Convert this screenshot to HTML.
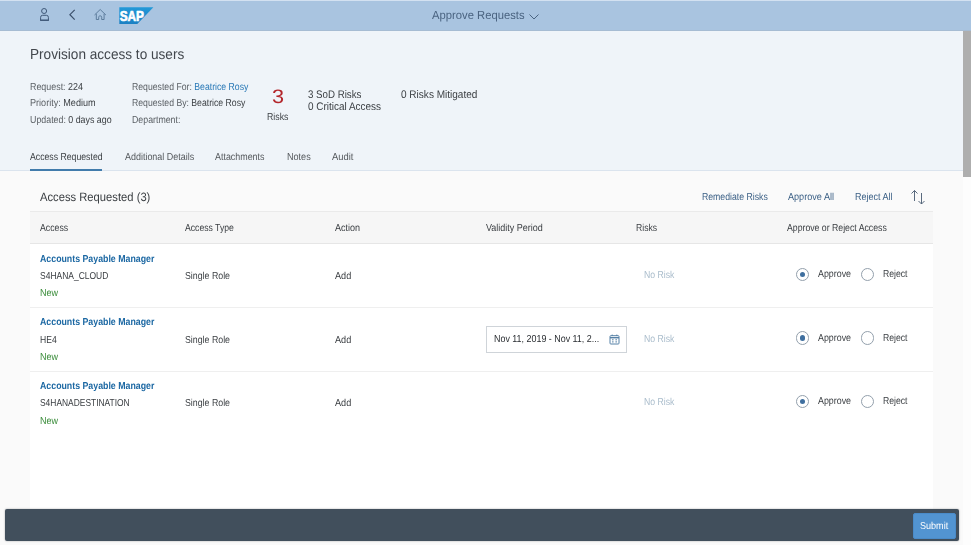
<!DOCTYPE html>
<html><head><meta charset="utf-8"><title>Approve Requests</title>
<style>
*{box-sizing:border-box;margin:0;padding:0}
html,body{width:971px;height:545px;overflow:hidden}
body{position:relative;background:#fafafa;font-family:"Liberation Sans",sans-serif;color:#32363a}
.a,.x,.rd{position:absolute}
.x{white-space:nowrap;transform-origin:0 50%;text-rendering:geometricPrecision}
#shell{left:0;top:0;width:971px;height:30.7px;background:#a9c4e0;border-top:1px solid #d3e1f1;border-bottom:1px solid #a6bcd3}
#hdr{left:0;top:30.7px;width:963px;height:140.3px;background:#eff4f9;border-bottom:1px solid #dbe4ee}
#sbtrack{left:963px;top:31px;width:8px;height:514px;background:#fdfdfd}
#sbthumb{left:963.3px;top:30.8px;width:8px;height:146px;background:#aeaeae}
#tbl{left:30px;top:244px;width:903px;height:266px;background:#fff}
#thead{left:30px;top:211px;width:903px;height:33px;background:#f6f6f6;border-top:1px solid #eaeaea;border-bottom:1px solid #e6e6e6}
.rl{left:30px;width:903px;height:1px;background:#efefef}
.rd{width:13.4px;height:13.4px;border:1px solid #93a0ac;border-radius:50%;background:#fff}
.rd i{position:absolute;left:2.9px;top:2.9px;width:5.6px;height:5.6px;border-radius:50%;background:#3f6f9f}
#footer{left:5px;top:509.1px;width:954.4px;height:32.4px;background:#414f5c;border-radius:2px;box-shadow:0 0 2px rgba(0,0,0,.35)}
#submit{left:912.8px;top:512.6px;width:43.4px;height:26.2px;background:#5294d1;border:1px solid #4a8bc8;border-radius:2px}
#tabline{left:30px;top:169px;width:72px;height:2px;background:#427cac}
#dt{left:486px;top:326px;width:141px;height:27px;border:1px solid #cfd4d9;background:#fff}
</style></head><body>
<div class="a" id="shell"></div>
<div class="a" id="hdr"></div>
<div class="a" id="sbtrack"></div><div class="a" id="sbthumb"></div>
<div class="a" id="tabline"></div>
<div class="a" id="thead"></div>
<div class="a" id="tbl"></div>
<div class="a rl" style="top:307px"></div>
<div class="a rl" style="top:370.500px"></div>
<div class="a" id="dt"></div>
<div class="a" id="footer"></div>
<div class="a" id="submit"></div>

<!-- shell icons -->
<svg class="a" style="left:38px;top:6px" width="14" height="18" viewBox="0 0 14 18" fill="none" stroke="#3f5878" stroke-width="1"><circle cx="6.100" cy="5" r="2.500"/><path d="M2.600 14.200V11.300q0-2 2-2h3.800q2 0 2 2V14.200z"/><path d="M2.100 14.300h8.800" stroke-width="1.200"/></svg>
<svg class="a" style="left:66px;top:7px" width="12" height="16" viewBox="0 0 12 16" fill="none" stroke="#3a4f6a" stroke-width="1.200"><path d="M8.700 2.900L3.900 7.700l4.800 4.900"/></svg>
<svg class="a" style="left:92px;top:7px" width="16" height="16" viewBox="0 0 16 16" fill="none" stroke="#557595" stroke-width="0.900"><path d="M2.500 8L8.200 2.500l5.700 5.500M4.300 6.800v5.700h2.400V10.300c0-0.900 0.600-1.500 1.500-1.500s1.500 0.600 1.500 1.500v2.200h2.400V6.800"/></svg>
<svg class="a" style="left:119px;top:7px" width="35" height="17" viewBox="0 0 35 17"><defs><linearGradient id="sg" x1="0" y1="0" x2="0" y2="1"><stop offset="0" stop-color="#2299d8"/><stop offset="1" stop-color="#1b80c3"/></linearGradient></defs><path d="M0.300 0.200H34.400L18.300 17H0.300z" fill="url(#sg)"/><text x="0.700" y="13.900" font-family="Liberation Sans, sans-serif" font-weight="bold" font-size="14.800" fill="#fff" stroke="#fff" stroke-width="0.700" stroke-linejoin="round" textLength="24.300" lengthAdjust="spacingAndGlyphs">SAP</text></svg>
<svg class="a" style="left:528px;top:13px" width="12" height="8" viewBox="0 0 12 8" fill="none" stroke="#4a6482" stroke-width="1"><path d="M1.500 1.500l4.500 4.500 4.500-4.500"/></svg>
<svg class="a" style="left:909px;top:189px" width="18" height="16" viewBox="0 0 18 16" fill="none" stroke="#506277" stroke-width="0.950"><path d="M5.500 12V1.500M2.500 4.500l3-3 3 3M12.500 4v11M9.500 12l3 3 3-3"/></svg>
<svg class="a" style="left:608.500px;top:333.500px" width="11" height="11" viewBox="0 0 11 11" fill="none" stroke="#5580a6" stroke-width="1"><rect x="1" y="1.700" width="9" height="8.300" rx="0.800"/><path d="M1 3.700h9" stroke-width="1.400"/><path d="M3.200 0.600v1.400M7.800 0.600v1.400M3 5.800h1.600M6.400 5.800h1.600M3 7.900h1.600M6.400 7.900h1.600"/></svg>

<div class="rd" style="left:795.9px;top:267.7px"><i></i></div>
<div class="rd" style="left:860.5px;top:267.7px"></div>
<div class="rd" style="left:795.9px;top:331.3px"><i></i></div>
<div class="rd" style="left:860.5px;top:331.3px"></div>
<div class="rd" style="left:795.9px;top:394.9px"><i></i></div>
<div class="rd" style="left:860.5px;top:394.9px"></div>
<div class="a" id="txt" style="left:0;top:0;width:971px;height:545px;will-change:transform">
<div class="x" style="left:431.71px;top:7.00px;font-size:11.80px;line-height:16px;color:#4a6380;transform:scaleX(0.9536)">Approve Requests</div>
<div class="x" style="left:30.27px;top:46.00px;font-size:14.50px;line-height:19px;color:#42474d;transform:scaleX(0.9383)">Provision access to users</div>
<div class="x" style="left:29.89px;top:81.00px;font-size:10.10px;line-height:14px;color:#3a3e42;transform:scaleX(0.8806)"><span style="color:#5a5f64">Request:</span> 224</div>
<div class="x" style="left:29.89px;top:97.00px;font-size:10.10px;line-height:14px;color:#3a3e42;transform:scaleX(0.8993)"><span style="color:#5a5f64">Priority:</span> Medium</div>
<div class="x" style="left:29.89px;top:114.00px;font-size:10.10px;line-height:14px;color:#3a3e42;transform:scaleX(0.8755)"><span style="color:#5a5f64">Updated:</span> 0 days ago</div>
<div class="x" style="left:131.50px;top:81.00px;font-size:10.10px;line-height:14px;color:#3a3e42;transform:scaleX(0.8604)"><span style="color:#5a5f64">Requested For:</span> <span style="color:#2878b6">Beatrice Rosy</span></div>
<div class="x" style="left:131.50px;top:97.00px;font-size:10.10px;line-height:14px;color:#3a3e42;transform:scaleX(0.8596)"><span style="color:#5a5f64">Requested By:</span> Beatrice Rosy</div>
<div class="x" style="left:131.50px;top:114.00px;font-size:10.10px;line-height:14px;color:#5a5f64;transform:scaleX(0.8711)">Department:</div>
<div class="x" style="left:271.72px;top:85.00px;font-size:19.50px;line-height:25px;color:#b3262b;transform:scaleX(1.1111)">3</div>
<div class="x" style="left:267.30px;top:111.00px;font-size:10.10px;line-height:14px;color:#3a3e42;transform:scaleX(0.8672)">Risks</div>
<div class="x" style="left:308.15px;top:88.00px;font-size:11.00px;line-height:15px;color:#3a3e42;transform:scaleX(0.8824)">3 SoD Risks</div>
<div class="x" style="left:308.15px;top:100.00px;font-size:11.00px;line-height:15px;color:#3a3e42;transform:scaleX(0.9047)">0 Critical Access</div>
<div class="x" style="left:400.85px;top:88.00px;font-size:11.00px;line-height:15px;color:#3a3e42;transform:scaleX(0.9122)">0 Risks Mitigated</div>
<div class="x" style="left:29.89px;top:151.00px;font-size:10.10px;line-height:14px;color:#3a3e42;transform:scaleX(0.8622)">Access Requested</div>
<div class="x" style="left:124.50px;top:151.00px;font-size:10.10px;line-height:14px;color:#55595d;transform:scaleX(0.8869)">Additional Details</div>
<div class="x" style="left:215.30px;top:151.00px;font-size:10.10px;line-height:14px;color:#55595d;transform:scaleX(0.8819)">Attachments</div>
<div class="x" style="left:286.80px;top:151.00px;font-size:10.10px;line-height:14px;color:#55595d;transform:scaleX(0.8986)">Notes</div>
<div class="x" style="left:332.10px;top:151.00px;font-size:10.10px;line-height:14px;color:#55595d;transform:scaleX(0.9300)">Audit</div>
<div class="x" style="left:40.00px;top:189.00px;font-size:12.10px;line-height:17px;color:#3a3e42;transform:scaleX(0.9275)">Access Requested (3)</div>
<div class="x" style="left:701.70px;top:191.00px;font-size:10.10px;line-height:14px;color:#3a5f85;transform:scaleX(0.8621)">Remediate Risks</div>
<div class="x" style="left:787.89px;top:191.00px;font-size:10.10px;line-height:14px;color:#3a5f85;transform:scaleX(0.9005)">Approve All</div>
<div class="x" style="left:854.89px;top:191.00px;font-size:10.10px;line-height:14px;color:#3a5f85;transform:scaleX(0.8886)">Reject All</div>
<div class="x" style="left:39.89px;top:222.00px;font-size:10.10px;line-height:14px;color:#3a3e42;transform:scaleX(0.8635)">Access</div>
<div class="x" style="left:185.19px;top:222.00px;font-size:10.10px;line-height:14px;color:#3a3e42;transform:scaleX(0.8569)">Access Type</div>
<div class="x" style="left:335.39px;top:222.00px;font-size:10.10px;line-height:14px;color:#3a3e42;transform:scaleX(0.8945)">Action</div>
<div class="x" style="left:485.50px;top:222.00px;font-size:10.10px;line-height:14px;color:#3a3e42;transform:scaleX(0.8903)">Validity Period</div>
<div class="x" style="left:636.29px;top:222.00px;font-size:10.10px;line-height:14px;color:#3a3e42;transform:scaleX(0.8550)">Risks</div>
<div class="x" style="left:786.89px;top:222.00px;font-size:10.10px;line-height:14px;color:#3a3e42;transform:scaleX(0.8631)">Approve or Reject Access</div>
<div class="x" style="left:40.29px;top:253.00px;font-size:10.10px;line-height:14px;color:#1c68a3;font-weight:bold;transform:scaleX(0.8711)">Accounts Payable Manager</div>
<div class="x" style="left:40.29px;top:270.00px;font-size:10.10px;line-height:14px;color:#3a3e42;transform:scaleX(0.8405)">S4HANA_CLOUD</div>
<div class="x" style="left:40.29px;top:287.00px;font-size:10.10px;line-height:14px;color:#3a8c3a;transform:scaleX(0.8913)">New</div>
<div class="x" style="left:185.30px;top:270.00px;font-size:10.10px;line-height:14px;color:#3a3e42;transform:scaleX(0.8714)">Single Role</div>
<div class="x" style="left:335.39px;top:270.00px;font-size:10.10px;line-height:14px;color:#3a3e42;transform:scaleX(0.9020)">Add</div>
<div class="x" style="left:644.10px;top:269.00px;font-size:10.10px;line-height:14px;color:#a9bccb;transform:scaleX(0.8601)">No Risk</div>
<div class="x" style="left:818.10px;top:268.00px;font-size:10.10px;line-height:14px;color:#3a3e42;transform:scaleX(0.8775)">Approve</div>
<div class="x" style="left:883.10px;top:268.00px;font-size:10.10px;line-height:14px;color:#3a3e42;transform:scaleX(0.8561)">Reject</div>
<div class="x" style="left:40.29px;top:316.00px;font-size:10.10px;line-height:14px;color:#1c68a3;font-weight:bold;transform:scaleX(0.8711)">Accounts Payable Manager</div>
<div class="x" style="left:40.29px;top:334.00px;font-size:10.10px;line-height:14px;color:#3a3e42;transform:scaleX(0.8504)">HE4</div>
<div class="x" style="left:40.29px;top:351.00px;font-size:10.10px;line-height:14px;color:#3a8c3a;transform:scaleX(0.8913)">New</div>
<div class="x" style="left:185.30px;top:334.00px;font-size:10.10px;line-height:14px;color:#3a3e42;transform:scaleX(0.8714)">Single Role</div>
<div class="x" style="left:335.39px;top:334.00px;font-size:10.10px;line-height:14px;color:#3a3e42;transform:scaleX(0.9020)">Add</div>
<div class="x" style="left:644.10px;top:333.00px;font-size:10.10px;line-height:14px;color:#a9bccb;transform:scaleX(0.8601)">No Risk</div>
<div class="x" style="left:818.10px;top:332.00px;font-size:10.10px;line-height:14px;color:#3a3e42;transform:scaleX(0.8775)">Approve</div>
<div class="x" style="left:883.10px;top:332.00px;font-size:10.10px;line-height:14px;color:#3a3e42;transform:scaleX(0.8561)">Reject</div>
<div class="x" style="left:40.29px;top:380.00px;font-size:10.10px;line-height:14px;color:#1c68a3;font-weight:bold;transform:scaleX(0.8711)">Accounts Payable Manager</div>
<div class="x" style="left:40.29px;top:397.00px;font-size:10.10px;line-height:14px;color:#3a3e42;transform:scaleX(0.8340)">S4HANADESTINATION</div>
<div class="x" style="left:40.29px;top:415.00px;font-size:10.10px;line-height:14px;color:#3a8c3a;transform:scaleX(0.8913)">New</div>
<div class="x" style="left:185.30px;top:397.00px;font-size:10.10px;line-height:14px;color:#3a3e42;transform:scaleX(0.8714)">Single Role</div>
<div class="x" style="left:335.39px;top:397.00px;font-size:10.10px;line-height:14px;color:#3a3e42;transform:scaleX(0.9020)">Add</div>
<div class="x" style="left:644.10px;top:396.00px;font-size:10.10px;line-height:14px;color:#a9bccb;transform:scaleX(0.8601)">No Risk</div>
<div class="x" style="left:818.10px;top:395.00px;font-size:10.10px;line-height:14px;color:#3a3e42;transform:scaleX(0.8775)">Approve</div>
<div class="x" style="left:883.10px;top:395.00px;font-size:10.10px;line-height:14px;color:#3a3e42;transform:scaleX(0.8561)">Reject</div>
<div class="x" style="left:494.10px;top:333.00px;font-size:10.10px;line-height:14px;color:#2a2e32;transform:scaleX(0.8826)">Nov 11, 2019 - Nov 11, 2...</div>
<div class="x" style="left:920.20px;top:520.00px;font-size:10.00px;line-height:14px;color:#ffffff;transform:scaleX(0.9061)">Submit</div>
</div>
</body></html>
